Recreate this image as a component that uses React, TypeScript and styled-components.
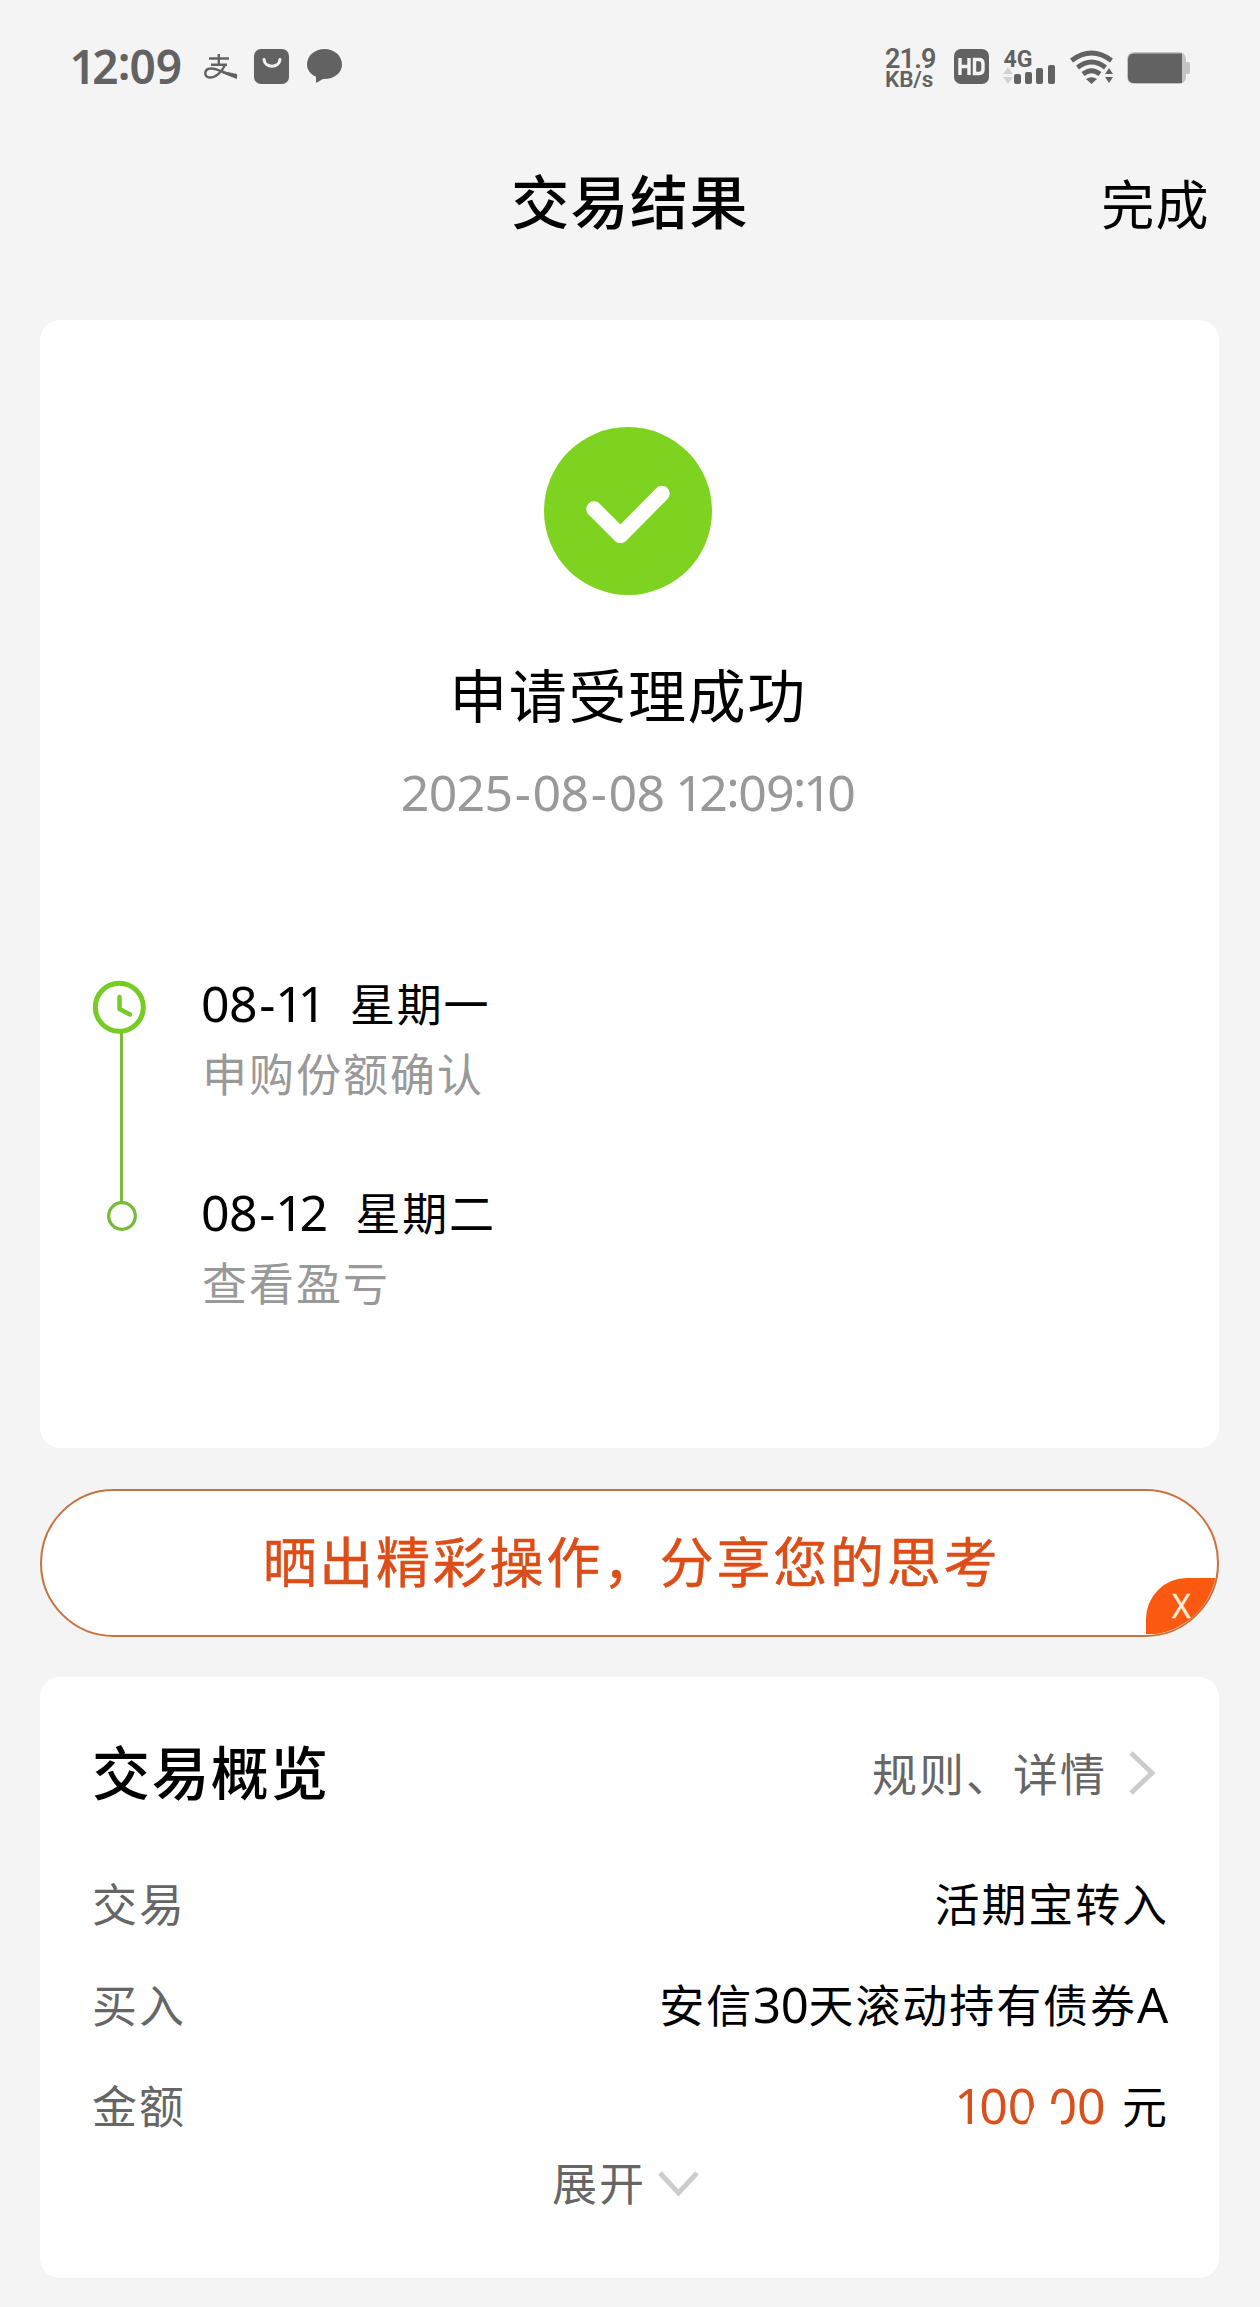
import React from "react";
import styled, { createGlobalStyle } from "styled-components";

const Global = createGlobalStyle`
  *{box-sizing:border-box;}
  html,body{margin:0;padding:0;background:#f4f4f4;}
  body{font-family:"Noto Sans","Noto Sans CJK SC",sans-serif;color:#000;}
`;
const cjk = `"Noto Sans CJK SC",sans-serif`;
const num = `"Noto Sans","Noto Sans CJK SC",sans-serif`;

const Page = styled.div`
  width: 1260px; height: 2307px; overflow: hidden; background: #f4f4f4;
  display: flex; flex-direction: column;
`;
const StatusBar = styled.div`
  height: 134px; flex: none; padding: 0 70px 0 71px;
  display: flex; justify-content: space-between; color: #626262;
`;
const StatusSide = styled.div`display: flex; height: 134px; align-items: center;`;
const Clock = styled.div`
  font: 600 46px/50px ${num}; width: 133px; padding-bottom: 2px; white-space: nowrap;
`;
const StatusIcons = styled.svg<{ $w: number }>`
  display: block; flex: none; width: ${(p) => p.$w}px; height: 134px; overflow: visible;
`;
const Speed = styled.div`
  width: 68px; display: flex; flex-direction: column; padding-top: 2px; white-space: nowrap; font-family: Roboto, sans-serif;
`;
const SpeedValue = styled.span`font-size: 27px; font-weight: 600; line-height: 22px; letter-spacing: -0.8px;`;
const SpeedUnit = styled.span`font-size: 22.5px; font-weight: 600; line-height: 19px; letter-spacing: -0.1px;`;
const NavBar = styled.header`
  height: 186px; flex: none; display: grid; grid-template-columns: 1fr auto 1fr; padding-top: 25px;
`;
const Title = styled.h1`
  margin: -2px 0 0; font: 500 58px/84px ${cjk}; letter-spacing: 1.4px; white-space: nowrap;
`;
const Done = styled.span`
  font: 400 53px/87px ${cjk}; letter-spacing: 1.4px; justify-self: end; padding-right: 50px; white-space: nowrap;
`;
const Card = styled.section<{ $h: number; $gap: number }>`
  width: 1179px; height: ${(p) => p.$h}px; margin: 0 0 ${(p) => p.$gap}px 40px; flex: none;
  background: #fff; border-radius: 20px; display: flex; flex-direction: column;
`;
const Result = styled.div`
  display: flex; flex-direction: column; align-items: center; padding: 107px 3px 0 0; height: 630px;
`;
const Headline = styled.div`font: 400 58px/84px ${cjk}; letter-spacing: 1.6px; margin-top: 56px; white-space: nowrap;`;
const Stamp = styled.div`
  font: 400 50px/60px ${num}; letter-spacing: -0.62px; color: #999; margin-top: 27px; white-space: nowrap;
`;
const Timeline = styled.div`display: flex; padding-left: 52px;`;
const Rail = styled.svg`display: block; width: 110px; height: 260px; overflow: visible;`;
const Steps = styled.div`display: flex; flex-direction: column; padding-top: 20px;`;
const Step = styled.div`height: 209px; display: flex; flex-direction: column;`;
const StepDate = styled.div`
  display: flex; gap: 28px; height: 68px; margin-left: -1px; font: 400 45px/66px ${cjk}; letter-spacing: 1.8px; white-space: nowrap;
`;
const Digits = styled.span<{ $tight?: boolean }>`
  font-family: ${num}; font-size: 50px; letter-spacing: ${(p) => (p.$tight ? "-0.6px" : "0")};
`;
const Narrow = styled.span`margin: 0 -0.075em 0 -0.035em;`;
const Dash = styled.span`margin: 0 0.045em;`;
const Colon = styled.span`display: inline-block; margin: 0 -0.02em; transform: translateY(-0.08em);`;
const StepNote = styled.div`font: 400 45px/70px ${cjk}; letter-spacing: 2px; color: #999; white-space: nowrap;`;
const SharePill = styled.div`
  position: relative; width: 1179px; height: 148px; margin: 0 0 40px 40px; flex: none; overflow: hidden;
  border: 2px solid #c8733f; border-radius: 74px; background: #fff; color: #dd4d17;
  display: flex; justify-content: center; padding-left: 4px;
  font: 400 54px/138px ${cjk}; letter-spacing: 2.75px; white-space: nowrap; -webkit-text-stroke: 0.5px #dd4d17;
`;
const CloseTag = styled.span`
  position: absolute; right: 0; bottom: 1px; width: 71px; height: 56px; border-top-left-radius: 41px;
  background: #fb5912; color: #fff0d8; font: 400 32px/55px "Noto Sans", sans-serif; letter-spacing: 0; padding-left: 26px;
  -webkit-text-stroke: 0.3px #fff0d8;
`;
const OverviewHead = styled.div`
  display: flex; justify-content: space-between; height: 172px; padding: 53px 62px 0 52px;
`;
const RulesLink = styled.div`
  display: flex; font: 400 45px/86px ${cjk}; letter-spacing: 2px; color: #666; white-space: nowrap;
`;
const Row = styled.div`
  display: flex; justify-content: space-between; height: 101px; padding: 0 50px 0 52px;
  font: 400 45px/108px ${cjk}; letter-spacing: 1.9px; white-space: nowrap;
`;
const Label = styled.span`color: #666;`;
const Latin = styled.span<{ $gap: number }>`
  font-family: ${num}; font-size: 49px; letter-spacing: ${(p) => p.$gap}px;
`;
const Amount = styled.span`display: flex;`;
const Sum = styled.span`
  position: relative; display: flex; width: 150px; margin-right: 16px; color: #d9501c;
`;
const Cents = styled.span`padding-left: 12px; display: flex;`;
const Smudge = styled.svg`position: absolute; left: 0; top: 0; width: 150px; height: 109px;`;
const Expand = styled.div`
  display: flex; padding-left: 512px; font: 400 45px/66px ${cjk}; letter-spacing: 2px; color: #666;
  height: 66px; margin-top: -3px;
`;

function Numerals({ text }: { text: string }) {
  return (
    <>
      {text.split("").map((ch, i) => {
        if (ch === "1") return <Narrow key={i}>{ch}</Narrow>;
        if (ch === "-") return <Dash key={i}>{ch}</Dash>;
        if (ch === ":") return <Colon key={i}>{ch}</Colon>;
        return <React.Fragment key={i}>{ch}</React.Fragment>;
      })}
    </>
  );
}

export default function App() {
  return (
    <Page>
      <Global />
      <StatusBar>
        <StatusSide>
          <Clock><Numerals text="12:09" /></Clock>
          <StatusIcons $w={140} viewBox="0 0 140 134">
            <g fill="none" stroke="#626262">
              <path d="M5 58.5H25M7 64.8H23M14.8 54V64.8" strokeWidth="2.4" />
              <path d="M21 65C18 72 11 78 5.500 77.500C-.5 76.500 0 69 6.500 68.500C14 68 20 74 33 77" strokeWidth="2.400" />
            </g>
            <path d="M19 71L33 74V79L18 73Z" fill="#626262" />
            <rect x="50" y="49" width="35" height="35" rx="7" fill="#626262" />
            <path d="M60 59.500C61 68.500 75 68.500 76 59.500" fill="none" stroke="#f4f4f4" strokeWidth="3" strokeLinecap="round" />
            <path d="M120.500 49C130.500 49 138 56 138 64.500C138 73 130 79.500 119 79L112 83V76.800C106 74 103 69.500 103 64.500C103 56 110.500 49 120.500 49Z" fill="#626262" />
          </StatusIcons>
        </StatusSide>
        <StatusSide>
          <Speed><SpeedValue>21.9</SpeedValue><SpeedUnit>KB/s</SpeedUnit></Speed>
          <StatusIcons $w={237} viewBox="953 0 237 134">
            <rect x="954" y="49" width="35" height="35" rx="7" fill="#626262" />
            <path d="M960 58V75M969 58V75M960 66.500H969M974.500 59.500V73.500H979Q983 73.500 983 69.500V63.500Q983 59.500 979 59.500Z" fill="none" stroke="#f4f4f4" strokeWidth="3.400" />
            <text x="1003.500" y="67" fontSize="24.500" fontWeight="700" fontFamily="Roboto" fill="#626262" textLength="29" lengthAdjust="spacingAndGlyphs">4G</text>
            <path d="M1003 74L1008 67L1013 74ZM1003 77L1008 84L1013 77Z" fill="#d2d2d2" />
            <g fill="#626262">
              <rect x="1014" y="74" width="7" height="10" rx="2" />
              <rect x="1025" y="72" width="7" height="12" rx="2" />
              <rect x="1036" y="68" width="7" height="16" rx="2" />
              <rect x="1048" y="65" width="7" height="19" rx="2" />
              <path d="M1086 79Q1091.500 75.500 1097 79L1091.500 84Z" />
              <path d="M1105 74L1109 68L1113 74ZM1105 77L1109 83L1113 77Z" />
            </g>
            <g fill="none" stroke="#626262" strokeWidth="4.800">
              <path d="M1071.500 60.500Q1091.500 45.500 1111.500 60.500" />
              <path d="M1077.500 67.500Q1091.500 56.500 1105.500 67.500" />
              <path d="M1083 74Q1091.500 67.500 1100 74" />
            </g>
            <rect x="1127" y="52" width="59" height="32" rx="7" fill="#c4c4c4" />
            <rect x="1184" y="62" width="6" height="12" rx="2" fill="#c4c4c4" />
            <path d="M1134 53.500H1182V83H1134Q1128 83 1128 77V59.500Q1128 53.500 1134 53.500Z" fill="#626262" />
          </StatusIcons>
        </StatusSide>
      </StatusBar>

      <NavBar>
        <span />
        <Title>交易结果</Title>
        <Done>完成</Done>
      </NavBar>

      <Card $h={1128} $gap={41}>
        <Result>
          <svg width="168" height="168" viewBox="0 0 168 168">
            <circle cx="84" cy="84" r="84" fill="#7ed321" />
            <path d="M50 82L76.500 108.500L118 66.500" fill="none" stroke="#fff" strokeWidth="15.500" strokeLinecap="round" strokeLinejoin="round" />
          </svg>
          <Headline>申请受理成功</Headline>
          <Stamp><Numerals text="2025-08-08 12:09:10" /></Stamp>
        </Result>
        <Timeline>
          <Rail viewBox="0 0 110 260">
            <path d="M29.500 83V252" stroke="#7cbb3e" strokeWidth="3" />
            <circle cx="27.300" cy="57.300" r="24" fill="#fff" stroke="#76cb24" strokeWidth="5" />
            <path d="M27.500 47V59L38 64.500" fill="none" stroke="#76cb24" strokeWidth="4.500" strokeLinecap="round" strokeLinejoin="round" />
            <circle cx="30" cy="266" r="13.300" fill="#fff" stroke="#76bb33" strokeWidth="3.200" />
          </Rail>
          <Steps>
            <Step>
              <StepDate><Digits $tight><Numerals text="08-11" /></Digits><span>星期一</span></StepDate>
              <StepNote>申购份额确认</StepNote>
            </Step>
            <Step>
              <StepDate><Digits $tight><Numerals text="08-12" /></Digits><span>星期二</span></StepDate>
              <StepNote>查看盈亏</StepNote>
            </Step>
          </Steps>
        </Timeline>
      </Card>

      <SharePill>
        晒出精彩操作，分享您的思考
        <CloseTag>X</CloseTag>
      </SharePill>

      <Card $h={601} $gap={0}>
        <OverviewHead>
          <Title>交易概览</Title>
          <RulesLink>
            规则、详情
            <svg width="50" height="86" viewBox="0 0 50 86"><path d="M24 23L45 43L24 63" fill="none" stroke="#ccc" strokeWidth="4.800" /></svg>
          </RulesLink>
        </OverviewHead>
        <Row><Label>交易</Label><span>活期宝转入</span></Row>
        <Row><Label>买入</Label><span>安信<Latin $gap={-0.3}>30</Latin>天滚动持有债券<Latin $gap={0.8}>A</Latin></span></Row>
        <Row>
          <Label>金额</Label>
          <Amount>
            <Sum>
              <Digits><Numerals text="100" /></Digits>
              <Cents><Digits>00</Digits></Cents>
              <Smudge viewBox="0 0 150 109"><path d="M79 54L93 53H100L105 61V80H68L76 60Z" fill="#fff" /></Smudge>
            </Sum>
            元
          </Amount>
        </Row>
        <Expand>
          展开
          <svg width="60" height="66" viewBox="0 0 60 66"><path d="M14 24L32.500 44L51 24" fill="none" stroke="#ccc" strokeWidth="4.800" /></svg>
        </Expand>
      </Card>
    </Page>
  );
}
